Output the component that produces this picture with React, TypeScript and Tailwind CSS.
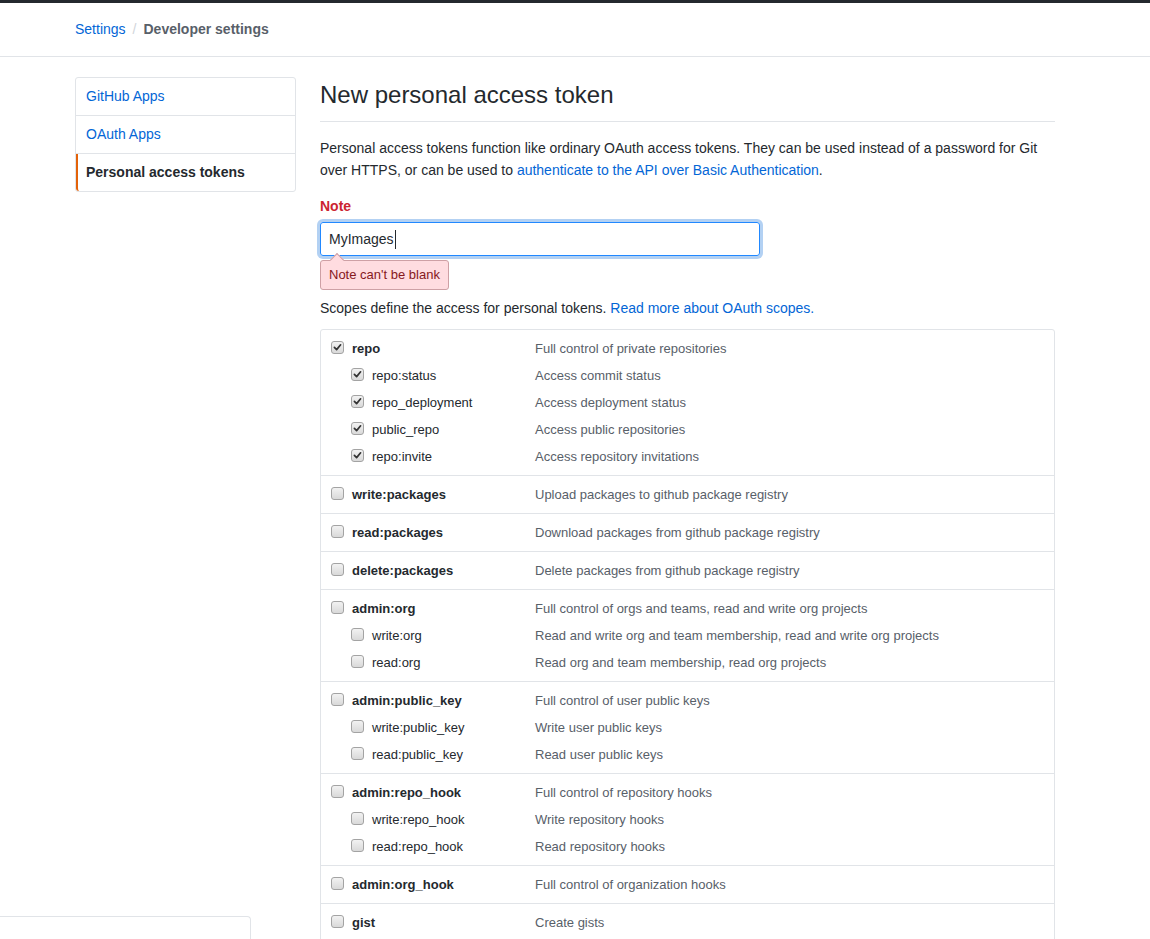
import React from 'react';

interface Scope {
    name: string;
    desc: string;
    checked?: boolean;
    children?: { name: string; desc: string; checked?: boolean }[];
}

const scopes: Scope[] = [
    {
        name: 'repo', desc: 'Full control of private repositories', checked: true,
        children: [
            { name: 'repo:status', desc: 'Access commit status', checked: true },
            { name: 'repo_deployment', desc: 'Access deployment status', checked: true },
            { name: 'public_repo', desc: 'Access public repositories', checked: true },
            { name: 'repo:invite', desc: 'Access repository invitations', checked: true },
        ],
    },
    { name: 'write:packages', desc: 'Upload packages to github package registry' },
    { name: 'read:packages', desc: 'Download packages from github package registry' },
    { name: 'delete:packages', desc: 'Delete packages from github package registry' },
    {
        name: 'admin:org', desc: 'Full control of orgs and teams, read and write org projects',
        children: [
            { name: 'write:org', desc: 'Read and write org and team membership, read and write org projects' },
            { name: 'read:org', desc: 'Read org and team membership, read org projects' },
        ],
    },
    {
        name: 'admin:public_key', desc: 'Full control of user public keys',
        children: [
            { name: 'write:public_key', desc: 'Write user public keys' },
            { name: 'read:public_key', desc: 'Read user public keys' },
        ],
    },
    {
        name: 'admin:repo_hook', desc: 'Full control of repository hooks',
        children: [
            { name: 'write:repo_hook', desc: 'Write repository hooks' },
            { name: 'read:repo_hook', desc: 'Read repository hooks' },
        ],
    },
    { name: 'admin:org_hook', desc: 'Full control of organization hooks' },
    { name: 'gist', desc: 'Create gists' },
    { name: 'notifications', desc: 'Access notifications' },
    {
        name: 'user', desc: 'Update all user data',
        children: [
            { name: 'read:user', desc: 'Read all user profile data' },
            { name: 'user:email', desc: 'Access user email addresses (read-only)' },
            { name: 'user:follow', desc: 'Follow and unfollow users' },
        ],
    },
    { name: 'delete_repo', desc: 'Delete repositories' },
];

const Checkbox: React.FC<{ checked?: boolean }> = ({ checked }) => (
    <span className="relative inline-block w-[13px] h-[13px] shrink-0 -mt-[2px] rounded-[3px] border border-[#a3a3a3] bg-gradient-to-b from-[#f2f2f2] to-[#d9d9d9]">
        {checked && (
            <svg viewBox="0 0 13 13" className="absolute -left-px -top-px w-[13px] h-[13px]">
                <path d="M3.4 6.4 L5.6 8.6 L9.6 3.8" fill="none" stroke="#333" strokeWidth="1.7" strokeLinecap="round" strokeLinejoin="round" />
            </svg>
        )}
    </span>
);

const ScopeLine: React.FC<{ name: string; desc: string; checked?: boolean; child?: boolean }> = ({ name, desc, checked, child }) => (
    <div className="flex items-center h-[27px]">
        <div className={`flex items-center gap-[8px] w-[204px] ${child ? 'pl-[20px]' : ''}`}>
            <Checkbox checked={checked} />
            <span className={child ? 'text-[#24292e]' : 'font-bold text-[#24292e]'}>{name}</span>
        </div>
        <span className="text-[#586069]">{desc}</span>
    </div>
);

export default function App() {
    return (
        <div className="min-h-screen bg-white text-[#24292e] text-[14px]" style={{ fontFamily: '"Liberation Sans", Arial, sans-serif' }}>
            <div className="h-[3px] bg-[#24292e]" />
            <div className="border-b border-[#e1e4e8] h-[54px] flex items-center px-[75px] text-[14px]">
                <a className="text-[#0366d6]">Settings</a>
                <span className="text-[#d1d5da] mx-[7px]">/</span>
                <span className="font-bold text-[#586069]">Developer settings</span>
            </div>

            <div className="flex gap-[24px] pl-[75px] pt-[20px]">
                <nav className="w-[221px] shrink-0 self-start border border-[#e1e4e8] rounded-[3px]">
                    <a className="block h-[38px] leading-[37px] px-[10px] text-[#0366d6] border-b border-[#e1e4e8]">GitHub Apps</a>
                    <a className="block h-[38px] leading-[37px] px-[10px] text-[#0366d6] border-b border-[#e1e4e8]">OAuth Apps</a>
                    <a className="block h-[37px] leading-[37px] px-[8px] font-bold text-[#24292e] border-l-2 border-[#e36209] rounded-bl-[3px]">Personal access tokens</a>
                </nav>

                <main className="w-[735px]">
                    <div className="border-b border-[#e1e4e8] pb-[8px] mb-[15px]">
                        <h2 className="text-[24px] leading-[36px] font-normal text-[#24292e]">New personal access token</h2>
                    </div>
                    <p className="leading-[22px] mb-[15px]">
                        Personal access tokens function like ordinary OAuth access tokens. They can be used instead of a password for Git over HTTPS, or can be used to{' '}
                        <a className="text-[#0366d6]">authenticate to the API over Basic Authentication</a>.
                    </p>

                    <label className="block font-bold text-[#cb2431] leading-[20px] mb-[6px]">Note</label>
                    <div className="relative w-[440px] h-[34px] border border-[#2188ff] rounded-[3px] shadow-[0_0_0_3px_rgba(3,102,214,0.3)] flex items-center px-[8px]">
                        <span className="text-[#24292e]">MyImages</span>
                        <span className="inline-block w-px h-[19px] bg-[#24292e] ml-px" />
                    </div>
                    <div className="relative mt-[4px] inline-block bg-[#ffdce0] border border-[#cea0a5] rounded-[3px] text-[#86181d] text-[13px] px-[8px] h-[30px] leading-[28px]">
                        <span className="absolute -top-[6px] left-[11px] w-[10px] h-[10px] rotate-45 bg-[#ffdce0] border-l border-t border-[#cea0a5]" />
                        <span className="relative">Note can't be blank</span>
                    </div>

                    <p className="mt-[7px] leading-[22px] mb-[10px]">
                        Scopes define the access for personal tokens. <a className="text-[#0366d6]">Read more about OAuth scopes.</a>
                    </p>

                    <div className="border border-[#e1e4e8] rounded-[3px] text-[13px]">
                        {scopes.map((s, i) => (
                            <div key={s.name} className={`py-[5px] pl-[10px] ${i > 0 ? 'border-t border-[#e1e4e8]' : ''}`}>
                                <ScopeLine name={s.name} desc={s.desc} checked={s.checked} />
                                {s.children?.map((c) => (
                                    <ScopeLine key={c.name} name={c.name} desc={c.desc} checked={c.checked} child />
                                ))}
                            </div>
                        ))}
                    </div>
                    <div className="h-[40px]" />
                </main>
            </div>

            <div className="fixed left-0 top-[916px] w-[251px] h-[60px] bg-white border-t border-r border-[#e1e4e8] rounded-tr-[4px]" />
        </div>
    );
}
